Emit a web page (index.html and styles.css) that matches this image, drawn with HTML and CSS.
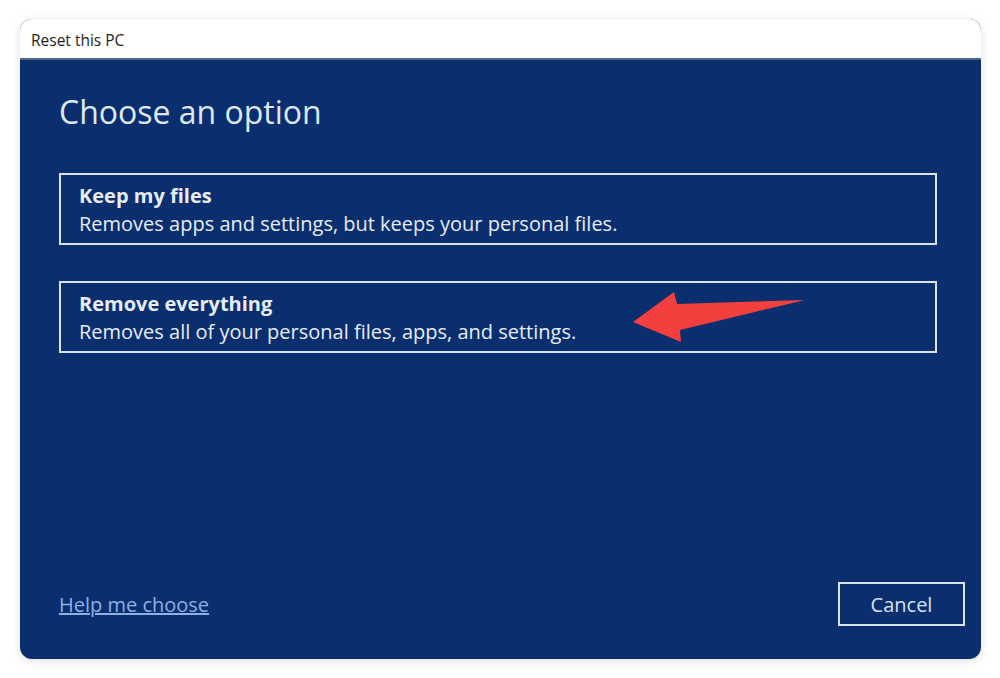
FILE: index.html
```html
<!DOCTYPE html>
<html>
<head>
<meta charset="utf-8">
<link rel="stylesheet" href="styles.css">
</head>
<body>
<div class="window">
  <div class="titlebar">Reset this PC</div>
  <div class="content">
    <h1 class="heading">Choose an option</h1>
    <div class="option">
      <div class="opt-title">Keep my files</div>
      <div class="opt-desc">Removes apps and settings, but keeps your personal files.</div>
    </div>
    <div class="option">
      <div class="opt-title">Remove everything</div>
      <div class="opt-desc">Removes all of your personal files, apps, and settings.</div>
      <svg class="arrow" width="200" height="70" viewBox="0 0 200 70">
        <polygon points="3,42 44,12 47,24 175,20 50,50 51,62" fill="#f43f3f"/>
      </svg>
    </div>
    <div class="spacer"></div>
    <div class="footer">
      <a class="help">Help me choose</a>
      <div class="cancel">Cancel</div>
    </div>
  </div>
</div>
</body>
</html>
```
FILE: styles.css
```css
html, body {
  margin: 0;
  padding: 0;
  background: #ffffff;
}
body {
  width: 1000px;
  height: 678px;
  padding: 19px 19px 0 20px;
  box-sizing: border-box;
  font-family: "Open Sans", "Noto Sans", sans-serif;
}
.window {
  width: 961px;
  height: 640px;
  border-radius: 12px;
  overflow: hidden;
  box-shadow: 0 2px 10px rgba(0,0,0,0.12);
  display: flex;
  flex-direction: column;
  background: #0b2e6f;
}
.titlebar {
  height: 41px;
  background: #ffffff;
  box-sizing: border-box;
  padding: 10px 0 0 11px;
  font-size: 15.5px;
  color: #222;
  border-bottom: 2px solid #4f6a88;
}
.content {
  flex: 1;
  display: flex;
  flex-direction: column;
  padding: 32px 44px 33px 39px;
}
.heading {
  margin: 0 0 41px 0;
  font-weight: 400;
  font-size: 32px;
  color: #dfe9f6;
  line-height: 40px;
}
.option {
  position: relative;
  width: 878px;
  height: 72px;
  box-sizing: border-box;
  border: 2px solid #dbe5f2;
  padding: 7px 18px;
  margin-bottom: 36px;
  color: #e6edf7;
}
.opt-title {
  font-weight: 700;
  font-size: 20px;
  line-height: 28px;
}
.opt-desc {
  font-size: 20px;
  line-height: 28px;
}
.arrow {
  position: absolute;
  left: 569px;
  top: -3px;
}
.spacer { flex: 1; }
.footer {
  display: flex;
  justify-content: space-between;
  align-items: center;
}
.help {
  color: #8cb1e6;
  text-decoration: underline;
  font-size: 20px;
}
.cancel {
  width: 127px;
  height: 44px;
  box-sizing: border-box;
  border: 2px solid #dbe5f2;
  color: #d5e2f3;
  font-size: 20px;
  display: flex;
  align-items: center;
  justify-content: center;
  margin-right: -28px;
}
```
